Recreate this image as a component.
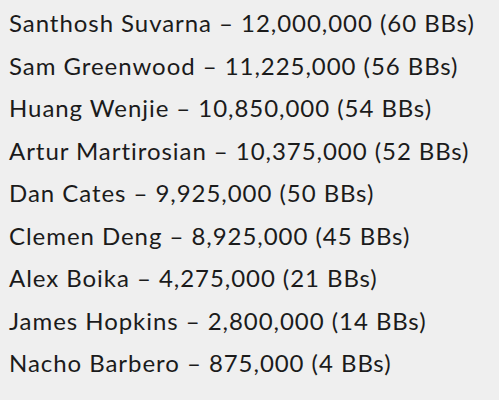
import React from 'react'

const players = [
  ['Santhosh Suvarna', '12,000,000', 60],
  ['Sam Greenwood', '11,225,000', 56],
  ['Huang Wenjie', '10,850,000', 54],
  ['Artur Martirosian', '10,375,000', 52],
  ['Dan Cates', '9,925,000', 50],
  ['Clemen Deng', '8,925,000', 45],
  ['Alex Boika', '4,275,000', 21],
  ['James Hopkins', '2,800,000', 14],
  ['Nacho Barbero', '875,000', 4],
] as const

const App: React.FC = () => {
  return (
    <div
      className="w-[499px] h-[400px] bg-[#efefef] text-[#1b1b1b] pl-[9px] pt-[2px] overflow-hidden"
      style={{ fontFamily: 'Lato, "Open Sans", sans-serif', fontVariantLigatures: 'none' }}
    >
      {players.map(([name, chips, bbs]) => (
        <div key={name} className="text-[24px] leading-[42.5px] tracking-[0.95px] whitespace-nowrap">
          {name} – {chips} ({bbs} BBs)
        </div>
      ))}
    </div>
  )
}

export default App
